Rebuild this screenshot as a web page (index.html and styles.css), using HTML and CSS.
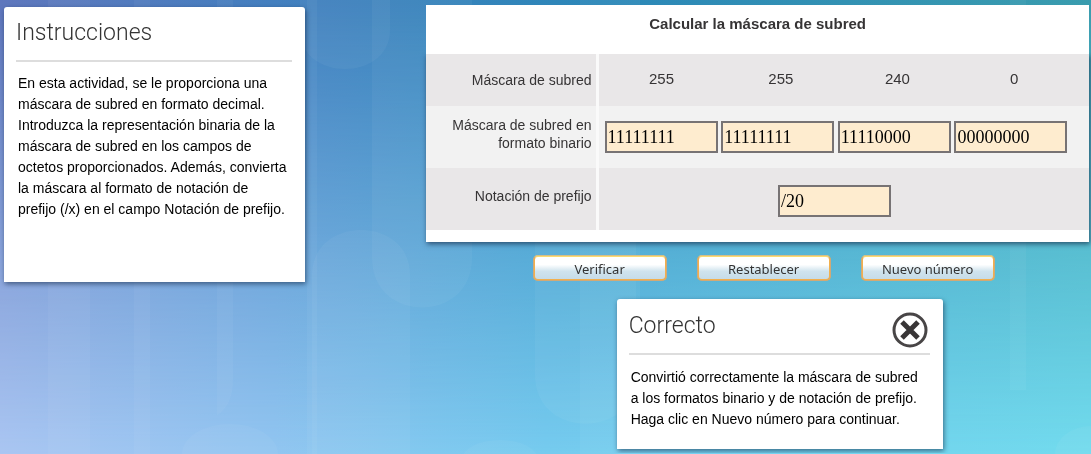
FILE: index.html
```html
<!DOCTYPE html>
<html lang="es">
<head>
<meta charset="utf-8">
<meta name="viewport" content="width=device-width, initial-scale=1">
<title>Calcular la máscara de subred</title>
<link rel="stylesheet" href="styles.css">
</head>
<body>
<svg class="backdrop" viewBox="0 0 1091 454" preserveAspectRatio="none" aria-hidden="true">
  <defs>
    <linearGradient id="top">
      <stop offset="0" stop-color="#5f77bd"/>
      <stop offset=".25" stop-color="#437fbf"/>
      <stop offset=".55" stop-color="#2c87b8"/>
      <stop offset="1" stop-color="#3a9cae"/>
    </linearGradient>
    <linearGradient id="bottom">
      <stop offset="0" stop-color="#aac6f2"/>
      <stop offset=".25" stop-color="#92c6f1"/>
      <stop offset=".5" stop-color="#76cbef"/>
      <stop offset="1" stop-color="#72dbee"/>
    </linearGradient>
    <linearGradient id="fade" x2="0" y2="1">
      <stop offset="0" stop-color="#fff" stop-opacity="0"/>
      <stop offset="1" stop-color="#fff"/>
    </linearGradient>
    <mask id="fall"><rect width="1091" height="454" fill="url(#fade)"/></mask>
  </defs>
  <rect width="1091" height="454" fill="url(#top)"/>
  <rect width="1091" height="454" fill="url(#bottom)" mask="url(#fall)"/>
  <g fill="#fff" fill-opacity=".045">
    <rect x="48" width="42" height="454"/>
    <rect x="134" width="16" height="454"/>
    <path d="M217 0H233V380C233 400 225 410 217 415Z"/>
    <rect x="307" width="10" height="454"/>
    <path d="M300 0H390V30C390 82 300 82 300 30Z"/>
    <path d="M312 454V275C312 215 410 215 410 275V454Z"/>
    <path d="M372 0H472V258C472 324 372 324 372 258Z"/>
    <path d="M535 242H636V375C636 440 535 440 535 375Z"/>
    <rect x="580" width="60" height="454"/>
    <rect x="1010" width="16" height="390"/>
    <ellipse cx="230" cy="454" rx="48" ry="30"/>
    <ellipse cx="500" cy="460" rx="38" ry="20"/>
    <ellipse cx="1091" cy="454" rx="36" ry="28"/>
  </g>
</svg>
<main class="activity">
  <section class="panel instructions" aria-labelledby="instructions-title">
    <h1 class="panel-title" id="instructions-title">Instrucciones</h1>
    <p class="panel-text">En esta actividad, se le proporciona una máscara de subred en formato decimal. Introduzca la representación binaria de la máscara de subred en los campos de octetos proporcionados. Además, convierta la máscara al formato de notación de prefijo (/x) en el campo Notación de prefijo.</p>
  </section>
  <form class="exercise">
    <table class="mask-table">
      <caption>Calcular la máscara de subred</caption>
      <colgroup><col class="label-col"><col class="first-octet-col"><col class="octet-col"><col class="octet-col"><col class="octet-col"><col></colgroup>
      <tbody>
        <tr class="decimal-row">
          <th scope="row">Máscara de subred</th>
          <td>255</td><td>255</td><td>240</td><td>0</td>
        </tr>
        <tr class="binary-row">
          <th scope="row">Máscara de subred en formato binario</th>
          <td><input class="field" type="text" aria-label="Octeto 1" value="11111111"></td>
          <td><input class="field" type="text" aria-label="Octeto 2" value="11111111"></td>
          <td><input class="field" type="text" aria-label="Octeto 3" value="11110000"></td>
          <td><input class="field" type="text" aria-label="Octeto 4" value="00000000"></td>
        </tr>
        <tr class="prefix-row">
          <th scope="row"><label for="prefix">Notación de prefijo</label></th>
          <td colspan="4"><input class="field" id="prefix" type="text" value="/20" autofocus></td>
        </tr>
      </tbody>
    </table>
    <div class="actions">
      <button class="action" type="button">Verificar</button>
      <button class="action" type="button">Restablecer</button>
      <button class="action" type="button">Nuevo número</button>
    </div>
    <section class="panel feedback" aria-labelledby="feedback-title">
      <header class="feedback-head">
        <h2 class="panel-title" id="feedback-title">Correcto</h2>
        <button class="close" type="button" aria-label="Cerrar">
          <svg viewBox="0 0 36 36" aria-hidden="true"><circle cx="18" cy="18" r="16" fill="#fff" stroke="#484546" stroke-width="3"/><path d="M10 10L26 26M26 10L10 26" stroke="#383536" stroke-width="5"/></svg>
        </button>
      </header>
      <p class="panel-text">Convirtió correctamente la máscara de subred a los formatos binario y de notación de prefijo. Haga clic en Nuevo número para continuar.</p>
    </section>
  </form>
</main>
</body>
</html>
```
FILE: styles.css
```css
* { box-sizing: border-box; }

body {
  margin: 0;
  background: #4f9fd6;
  color: #000;
  font: 14px/21px "Liberation Sans", Arial, sans-serif;
}

.backdrop {
  position: fixed;
  inset: 0;
  z-index: -1;
  width: 100%;
  height: 100%;
}

.activity {
  display: grid;
  grid-template-columns: minmax(0, 5fr) minmax(0, 11fr);
  column-gap: 121px;
  align-items: start;
  padding: 5px 2px 4px 4px;
}

.panel {
  background: #fff;
  border-radius: 3px 3px 0 0;
  box-shadow: 1px 2px 5px rgba(20, 40, 70, .6);
}

.panel-title {
  margin: 0;
  color: #333;
  font: 300 23px/28px Roboto, "Liberation Sans", sans-serif;
}

.panel-text {
  margin: 0;
  padding: 0 4px 0 2px;
}

.instructions {
  min-height: 275px;
  margin-top: 2px;
  padding: 12px 13px 12px 12px;
}

.instructions .panel-title {
  margin-bottom: 11px;
  padding-bottom: 13px;
  border-bottom: 2px solid #ddd;
}

.exercise {
  display: flex;
  flex-direction: column;
  align-items: center;
}

.mask-table {
  width: 100%;
  padding-bottom: 12px;
  border-spacing: 0;
  table-layout: fixed;
  background: #fff;
  box-shadow: 1px 2px 5px rgba(20, 40, 70, .7);
  color: #363435;
  line-height: 18px;
}

.mask-table caption {
  padding: 10px 0 21px;
  background: #fff;
  font-size: 15px;
  font-weight: bold;
}

.label-col { width: 26%; }
.first-octet-col { width: 18.4%; }
.octet-col { width: 17.6%; }

.mask-table th {
  padding: 0 4px 0 16px;
  border-right: 3px solid #fafafa;
  font-weight: normal;
  text-align: right;
}

.mask-table td { padding: 0; text-align: center; }

.mask-table tr::after { content: ""; display: table-cell; }

.decimal-row { height: 52px; background: #e9e7e8; }
.decimal-row td { padding: 0 0 2px 4px; font-size: 15px; }

.binary-row { height: 62px; background: #f2f2f2; }
.binary-row th { padding-bottom: 6px; }
.binary-row td { padding-right: 3px; text-align: right; }

.prefix-row { height: 62px; background: #e9e7e8; }
.prefix-row th { padding-bottom: 6px; }
.prefix-row td { padding-top: 4px; }

.field {
  width: 113px;
  height: 32px;
  padding: 0 1px;
  border: 2px solid #777374;
  outline: 0;
  background: #feeccf;
  color: #000;
  font: 18px/20px "Liberation Serif", "Times New Roman", serif;
}

.actions {
  display: flex;
  flex-wrap: wrap;
  justify-content: center;
  gap: 30px;
  padding: 13px 0 18px 12px;
}

.action {
  width: 134px;
  height: 26px;
  padding: 2px 0 0;
  border: 2px solid #f2b04d;
  border-top-color: #fbdc70;
  border-radius: 5px;
  outline: 1px solid #b5a49a88;
  outline-offset: -1px;
  background: linear-gradient(#fff 35%, #cfe3ed 65%, #c6dce8);
  color: #333;
  font: 13px/18px "Noto Sans", "Open Sans", sans-serif;
}

.feedback {
  width: 326px;
  max-width: 100%;
  margin-left: 44px;
  padding: 13px 13px 19px 12px;
}

.feedback-head {
  display: flex;
  justify-content: space-between;
  margin-bottom: 12px;
  padding: 0 2px 5px 0;
  border-bottom: 2px solid #ddd;
}

.close {
  width: 36px;
  height: 36px;
  padding: 0;
  border: 0;
  background: none;
}

.close svg { display: block; width: 100%; height: 100%; }
```
